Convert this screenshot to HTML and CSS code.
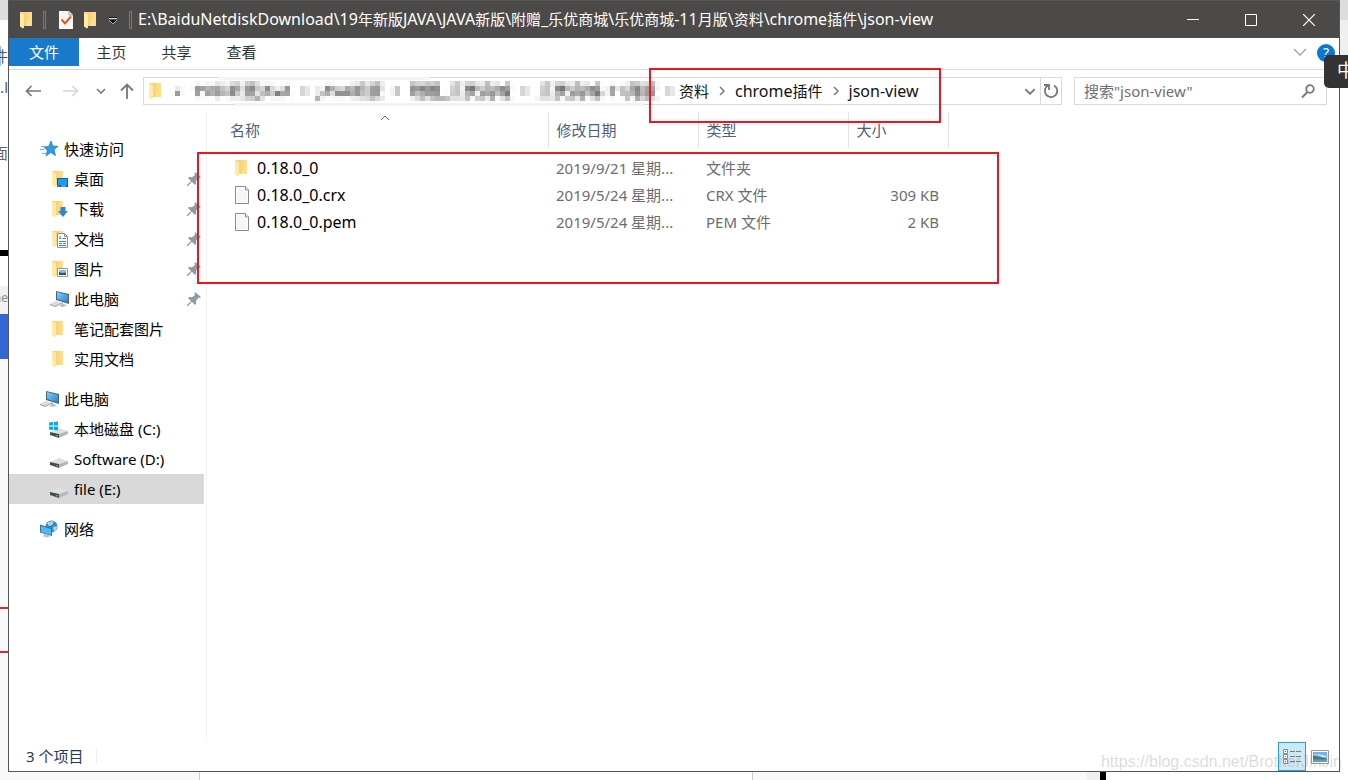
FILE: index.html
```html
<!DOCTYPE html>
<html lang="zh-CN">
<head>
<meta charset="utf-8">
<title>json-view</title>
<link rel="stylesheet" href="styles.css">
</head>
<body>
<svg class="defs" width="0" height="0" aria-hidden="true">
  <defs>
    <filter id="mosaic" x="0" y="0" width="1" height="1" color-interpolation-filters="sRGB">
      <feGaussianBlur in="SourceGraphic" stdDeviation="1.300" result="soft"/>
      <feFlood x="2" y="2" width="1" height="1"/>
      <feComposite x="0" y="0" width="5" height="5"/>
      <feTile result="grid"/>
      <feComposite in="soft" in2="grid" operator="in"/>
      <feMorphology operator="dilate" radius="2"/>
    </filter>
    <linearGradient id="gold" x1="0" x2="1"><stop offset="0" stop-color="#f0cd68"/><stop offset="1" stop-color="#ffdf8c"/></linearGradient>
    <linearGradient id="sky" x1="0" x2="1" y2="1"><stop offset="0" stop-color="#7fd0fb"/><stop offset="1" stop-color="#1e86d6"/></linearGradient>
    <symbol id="folder" viewBox="0 0 18 18"><path d="M2 1h12v14H2z" fill="url(#gold)"/><path d="M2 1l4 2v13.500l-1 1-3-2z" fill="#ffe9a8"/><path d="M10 11h1v4h-1z" fill="#fff2c4"/></symbol>
    <symbol id="halffolder" viewBox="0 0 18 18"><path d="M2 1h11v14H2z" fill="url(#gold)"/><path d="M2 1l4 2v13.500l-1 1-3-2z" fill="#ffe9a8"/></symbol>
    <symbol id="desktop" viewBox="0 0 18 18"><use href="#halffolder"/><path d="M7 8h11v9H7z" fill="#0b62b0"/><path d="M8 9h9v6H8z" fill="#1b9cf0"/><path d="M8 16h1M11 16h5" stroke="#9ad4ff"/></symbol>
    <symbol id="download" viewBox="0 0 18 18"><use href="#halffolder"/><path d="M10.500 7h5v4H18l-5 6-5-6h2.500z" fill="#2f86d4"/></symbol>
    <symbol id="docs" viewBox="0 0 18 18"><use href="#halffolder"/><path d="M7.500 3.500h7l3 3v11h-10z" fill="#fff" stroke="#8a8f94"/><path d="M14.500 3.500v3h3" fill="none" stroke="#8a8f94"/><path d="M9 8.500h2M12.500 8.500h3.500M9 11.500h7M9 13.500h3M13 13.500h3M9 15.500h7M10 6v3" stroke="#3b8bca"/></symbol>
    <symbol id="pics" viewBox="0 0 18 18"><use href="#halffolder"/><path d="M7.500 8.500h10v8h-10z" fill="#fff" stroke="#999"/><path d="M9 10h7v5H9z" fill="#82bce9"/><path d="M9 12l3 1 4-.5V15H9z" fill="#285b63"/></symbol>
    <symbol id="pc" viewBox="0 0 20 18"><path d="M7 1l13 3v10L7 10z" fill="#51616e"/><path d="M8 2l11 3v7.500L8 9z" fill="url(#sky)"/><path d="M12 11l2 1v2l4 1-4 2-4-1 2-1z" fill="#b7bcc0"/><path d="M1 14l6-3 5 2-6 3z" fill="#d9dcdf"/><path d="M1 14l5 2 6-3v1l-6 3-5-2z" fill="#8f979e"/></symbol>
    <symbol id="star" viewBox="0 0 18 18"><path d="M11 1l1.700 5 5.300.3-4 3.400 1.500 5.800-4.800-3L6 16l1.300-5.400L4 7l4.800-.6z" fill="#2b9be8" stroke="#1877bd" stroke-width=".7"/><path d="M1 6.500h5M0 9.500h4M2 13.500h4" stroke="#62b5ec"/></symbol>
    <symbol id="disk" viewBox="0 0 20 18"><path d="M1 12l9-4 9 3-9 3z" fill="#dfe0e2"/><path d="M1 12l9 2v4l-9-3z" fill="#464b4c"/><path d="M10 14l9-3v3l-9 4z" fill="#b4b6b8"/><path d="M7 15.500l2 .5" stroke="#3ecf68"/></symbol>
    <symbol id="sysdisk" viewBox="0 0 20 18"><use href="#disk"/><path d="M0 2.500l4-.5v3.500H0zM5 2l4-.5v4H5zM0 6.500h4V10l-4-.5zM5 6.500h4v4L5 10z" fill="#00adef"/></symbol>
    <symbol id="net" viewBox="0 0 20 18"><circle cx="12.500" cy="6.500" r="6" fill="#3b86b9"/><path d="M8 3q4-3 7-1l-2 3-3 1zM14 7l4-1q0 4-3 6z" fill="#a9d6e8"/><path d="M1 4.500l12 3.500v8L1 12.500z" fill="#3f7399"/><path d="M2 6l10 3v6L2 12z" fill="#4db8f8"/><path d="M5 14l4 1 3 1-4 1.500-4-1z" fill="#bcc3c8"/></symbol>
    <symbol id="pin" viewBox="0 0 14 14"><path d="M8 0l6 5-1.500 1-1-.3-2.500 3 .2 3L8 13 4.800 9.800 1 14H0v-1l4-4L1 6l1-1 3 .2L8 3l-.5-1.500z" fill="#8f9ba3"/></symbol>
    <symbol id="file" viewBox="0 0 18 18"><path d="M2.500.5h10l3 3.500v13.500h-13z" fill="#fff" stroke="#8a8a8a"/><path d="M4 2h7v4h3v10H4z" fill="#f4f6f7"/><path d="M12.500.5V4h3" fill="#fff" stroke="#8a8a8a"/></symbol>
    <symbol id="arrow" viewBox="0 0 16 12"><path d="M6.500 1L1.500 6l5 5M2 6h14" fill="none" stroke="currentColor" stroke-width="1.700"/></symbol>
    <symbol id="chev" viewBox="0 0 10 6"><path d="M1 1l4 4 4-4" fill="none" stroke="currentColor" stroke-width="1.600"/></symbol>
    <symbol id="gt" viewBox="0 0 6 10"><path d="M1 1l4 4-4 4" fill="none" stroke="currentColor" stroke-width="1.500"/></symbol>
  </defs>
</svg>

<div class="desk">
  <div class="edge-left" aria-hidden="true">
    <div class="el-top"></div>
    <div class="el-page">
      <span class="frag frag-a">件</span>
      <span class="frag frag-b">.l</span>
      <span class="frag frag-c">面</span>
    </div>
    <div class="el-bar"></div>
    <div class="el-gap"></div>
    <div class="el-tab">ne</div>
    <div class="el-blue"></div>
    <div class="el-rest"><i></i><i></i></div>
  </div>

  <main class="window">
    <header class="titlebar">
      <svg class="i18" aria-hidden="true"><use href="#folder"/></svg>
      <i class="tsep"></i>
      <button class="qa qa-doc" aria-label="属性"><svg width="14" height="18" viewBox="0 0 14 18"><path d="M0 0h10l4 4v14H0z" fill="#f8f8f8"/><path d="M10 0v4h4" fill="none" stroke="#999"/><path d="M2.500 8.500l3.500 4 6-7" fill="none" stroke="#e8590c" stroke-width="2"/></svg></button>
      <button class="qa" aria-label="新建文件夹"><svg class="i18"><use href="#folder"/></svg></button>
      <button class="qa qa-more" aria-label="自定义"><svg width="8" height="8" viewBox="0 0 8 8"><path d="M0 1.500h8" stroke="#111"/><path d="M0 2.500h8" stroke="#ddd"/><path d="M0 4h8L4 8z" fill="#111"/><path d="M0 4l4 4 4-4" fill="none" stroke="#ccc" stroke-width=".8"/></svg></button>
      <i class="tsep tsep-b"></i>
      <h1>E:\BaiduNetdiskDownload\19<span class="zh">年新版</span>JAVA\JAVA<span class="zh">新版</span>\<span class="zh">附赠</span>_<span class="zh">乐优商城</span>\<span class="zh">乐优商城</span>-11<span class="zh">月版</span>\<span class="zh">资料</span>\chrome<span class="zh">插件</span>\json-view</h1>
      <div class="wbtns">
        <button aria-label="最小化"><svg width="12" height="12"><path d="M0 5.500h12" stroke="#fff"/></svg></button>
        <button aria-label="最大化"><svg width="12" height="12"><path d="M.5.5h11v11H.5z" fill="none" stroke="#fff"/></svg></button>
        <button aria-label="关闭"><svg width="12" height="12"><path d="M0 0l12 12M12 0L0 12" stroke="#fff" stroke-width="1.200"/></svg></button>
      </div>
    </header>

    <nav class="ribbon">
      <button class="tab active">文件</button>
      <button class="tab">主页</button>
      <button class="tab">共享</button>
      <button class="tab">查看</button>
      <span class="grow"></span>
      <button class="expand" aria-label="展开功能区"><svg width="14" height="8"><path d="M1 1l6 6 6-6" fill="none" stroke="#a0a0a0" stroke-width="1.300"/></svg></button>
      <button class="help" aria-label="帮助">?</button>
    </nav>

    <div class="navbar">
      <button class="nb" aria-label="后退"><svg width="16" height="12"><use href="#arrow"/></svg></button>
      <button class="nb off" aria-label="前进"><svg width="16" height="12" class="flip"><use href="#arrow"/></svg></button>
      <button class="nb small" aria-label="最近"><svg width="10" height="6"><use href="#chev"/></svg></button>
      <button class="nb up" aria-label="上移"><svg width="14" height="16" viewBox="0 0 14 16"><path d="M1 7.500L7 1.500l6 6M7 2v14" fill="none" stroke="currentColor" stroke-width="1.800"/></svg></button>
      <div class="address">
        <svg class="i18" aria-hidden="true"><use href="#folder"/></svg>
        <div class="masked" aria-hidden="true">
          <span>«</span>
          <span>19年新版JAVA</span><svg width="6" height="10"><use href="#gt"/></svg>
          <span>JAVA新版</span><svg width="6" height="10"><use href="#gt"/></svg>
          <span>附赠_乐优商城</span><svg width="6" height="10"><use href="#gt"/></svg>
          <span>乐优商城-11月版</span><svg width="6" height="10"><use href="#gt"/></svg>
        </div>
        <a class="crumb" href="#"><span class="zh">资料</span></a><svg class="gt" width="6" height="10"><use href="#gt"/></svg>
        <a class="crumb" href="#">chrome<span class="zh">插件</span></a><svg class="gt" width="6" height="10"><use href="#gt"/></svg>
        <a class="crumb" href="#">json-view</a>
        <span class="grow"></span>
        <button class="drop" aria-label="历史"><svg width="12" height="7" viewBox="0 0 10 6"><use href="#chev"/></svg></button>
        <button class="refresh" aria-label="刷新"><svg width="16" height="16" viewBox="0 0 16 16"><path d="M5.500 2.300A6.200 6.200 0 1 0 11 2.500" fill="none" stroke="currentColor" stroke-width="1.800"/><path d="M1 2h5v5" fill="none" stroke="currentColor" stroke-width="1.800"/></svg></button>
      </div>
      <div class="search">
        <input type="text" aria-label="搜索" placeholder='搜索"json-view"'>
        <svg width="14" height="14" viewBox="0 0 14 14" aria-hidden="true"><circle cx="9" cy="5" r="3.800" fill="none" stroke="#777" stroke-width="1.800"/><path d="M6.500 8L1 13.500" stroke="#777" stroke-width="2"/></svg>
      </div>
    </div>

    <div class="body">
      <aside class="side">
        <div class="grp">
          <div class="row top"><svg class="ic"><use href="#star"/></svg>快速访问</div>
          <div class="row"><svg class="ic"><use href="#desktop"/></svg>桌面<svg class="pin"><use href="#pin"/></svg></div>
          <div class="row"><svg class="ic"><use href="#download"/></svg>下载<svg class="pin"><use href="#pin"/></svg></div>
          <div class="row"><svg class="ic"><use href="#docs"/></svg>文档<svg class="pin"><use href="#pin"/></svg></div>
          <div class="row"><svg class="ic"><use href="#pics"/></svg>图片<svg class="pin"><use href="#pin"/></svg></div>
          <div class="row"><svg class="ic"><use href="#pc"/></svg>此电脑<svg class="pin"><use href="#pin"/></svg></div>
          <div class="row"><svg class="ic"><use href="#halffolder"/></svg>笔记配套图片</div>
          <div class="row"><svg class="ic"><use href="#halffolder"/></svg>实用文档</div>
        </div>
        <div class="grp">
          <div class="row top"><svg class="ic"><use href="#pc"/></svg>此电脑</div>
          <div class="row"><svg class="ic"><use href="#sysdisk"/></svg>本地磁盘 (C:)</div>
          <div class="row"><svg class="ic"><use href="#disk"/></svg>Software (D:)</div>
          <div class="row sel"><svg class="ic"><use href="#disk"/></svg>file (E:)</div>
        </div>
        <div class="grp">
          <div class="row top"><svg class="ic"><use href="#net"/></svg>网络</div>
        </div>
      </aside>
      <section class="files">
        <table>
          <colgroup><col class="c-name"><col class="c-date"><col class="c-type"><col class="c-size"></colgroup>
          <thead><tr><th class="name">名称<svg class="sort" width="10" height="6"><path d="M1 5l4-4 4 4" fill="none" stroke="#666"/></svg></th><th>修改日期</th><th>类型</th><th>大小</th></tr></thead>
          <tbody>
            <tr><td class="name"><div class="fn"><svg class="fi"><use href="#folder"/></svg>0.18.0_0</div></td><td>2019/9/21 星期...</td><td>文件夹</td><td class="size"></td></tr>
            <tr><td class="name"><div class="fn"><svg class="fi"><use href="#file"/></svg>0.18.0_0.crx</div></td><td>2019/5/24 星期...</td><td>CRX 文件</td><td class="size">309 KB</td></tr>
            <tr><td class="name"><div class="fn"><svg class="fi"><use href="#file"/></svg>0.18.0_0.pem</div></td><td>2019/5/24 星期...</td><td>PEM 文件</td><td class="size">2 KB</td></tr>
          </tbody>
        </table>
      </section>
    </div>

    <footer class="status">
      <span class="count">3 个项目</span>
      <span class="grow"></span>
      <button class="vb on" aria-label="详细信息"><svg width="18" height="16" viewBox="0 0 18 16"><path d="M.5.5h4v4h-4zM.5 5.500h4v4h-4zM.5 10.500h4v4h-4z" fill="#fff" stroke="#8a8a8a"/><path d="M2 2h1v1H2z" fill="#1b72b8"/><path d="M2 7h1v1H2z" fill="#2a8"/><path d="M2 12h1v1H2z" fill="#d43"/><path d="M7 2.500h5M13 2.500h5M7 7.500h5M13 7.500h5M7 12.500h5M13 12.500h5" stroke="#7a7a7a"/></svg></button>
      <button class="vb" aria-label="大图标"><svg width="18" height="14" viewBox="0 0 18 14"><path d="M.5.5h17v13H.5z" fill="#fff" stroke="#999"/><path d="M2 2h14v10H2z" fill="#6fb0ee"/><path d="M2 5h5l4 2h5V6l-5-1-4-1z" fill="#d5eafa"/><path d="M2 6q5 0 14 3v1H2z" fill="#3f7a62"/><path d="M2 9.500h14V12H2z" fill="#5d9cd0"/></svg></button>
    </footer>
  </main>

  <div class="edge-right" aria-hidden="true"><div class="er-top"></div><div class="er-mid"></div></div>
  <div class="edge-bottom" aria-hidden="true"><i class="b1"></i><i class="b2"></i><i class="b3"></i><i class="b4"></i><i class="b5"></i></div>

  <div class="mark mark-path"></div>
  <div class="mark mark-files"></div>
  <div class="ime">中</div>
  <div class="watermark">https://blog.csdn.net/BrotherJinJin</div>
</div>
</body>
</html>
```
FILE: styles.css
```css
* { box-sizing: border-box; }
body { margin: 0; font: 15px/20px "Noto Sans", "Noto Sans CJK SC", sans-serif; color: #000; }
button { font: inherit; color: inherit; border: 0; padding: 0; background: none; display: flex; align-items: center; justify-content: center; }
svg { flex: none; display: block; }
.defs { position: absolute; }
.grow { flex: 1; }
.i18 { width: 18px; height: 18px; }
.zh { font-size: 15px; }

.desk { position: relative; display: grid; grid-template-columns: 8px minmax(0, 1fr) 8px; grid-template-rows: 1fr 8px; min-height: 100vh; overflow: hidden; background: #fff; }
.window { display: flex; flex-direction: column; border: 1px solid #555; border-top: 0; background: #fff; }

/* Desktop edges around the window */
.edge-left { display: flex; flex-direction: column; overflow: hidden; background: #f8f9fb; }
.el-top { height: 20px; background: #ddd; }
.el-page { height: 230px; background: #fff; padding-top: 26px; }
.frag { display: flex; justify-content: flex-end; height: 20px; width: 8px; overflow: hidden; color: #666; }
.frag-a { background: linear-gradient(90deg, #8cc8f7 1px, #fff 1px); color: #456; }
.frag-b { margin-top: 11px; color: #557; }
.frag-c { margin-top: 46px; }
.el-bar { height: 6px; background: #000; }
.el-gap { height: 30px; background: #fff; }
.el-tab { height: 28px; background: #f1f1f2; color: #888; font-size: 12px; line-height: 24px; display: flex; justify-content: flex-end; }
.el-blue { height: 45px; background: #3367d6; }
.el-rest { flex: 1; padding-top: 248px; }
.el-rest i { display: block; height: 2px; margin-bottom: 42px; background: #e8222a; }
.edge-right { background: #fff; }
.er-top { height: 20px; background: #ddd; }
.er-mid { height: 35px; background: #efefef; }
.edge-bottom { grid-column: 1 / -1; display: flex; background: #fff; }
.edge-bottom i { height: 8px; }
.b1 { width: 200px; background: #f8f9fb; border-right: 1px solid #ccc; }
.b2 { width: 553px; border-right: 1px solid #ccc; }
.b3 { width: 334px; background: #f8f9fb; }
.b4 { width: 13px; background: #f0f0f0; }
.b5 { width: 6px; background: #000; }

/* Title bar */
.titlebar { display: flex; align-items: center; height: 38px; padding: 0 1px 0 9px; background: #4c4a48; border-top: 1px solid #555; color: #fff; }
.tsep { width: 3px; height: 18px; margin-left: 7px; border: 1px solid #777; }
.tsep-b { margin-left: 12px; }
.qa-doc { margin-left: 13px; }
.qa { margin-right: 9px; }
.qa-more { margin-right: 0; }
h1 { flex: 1; min-width: 0; margin: 0 0 2px 6px; font-size: 16px; font-weight: 400; line-height: 24px; white-space: nowrap; overflow: hidden; }
.wbtns { display: flex; }
.wbtns button { width: 58px; height: 36px; }

/* Ribbon tabs */
.ribbon { display: flex; height: 32px; border-bottom: 1px solid #dadada; color: #333; }
.tab { width: 65px; height: 28px; }
.tab.active { width: 70px; background: #1979ca; color: #fff; }
.expand { width: 26px; height: 28px; }
.help { width: 18px; height: 18px; margin: 6px 4px 0 4px; border-radius: 50%; background: #0a78d7; color: #fff; font-size: 14px; }

/* Navigation bar */
.navbar { display: flex; align-items: center; height: 42px; padding: 0 12px 0 16px; color: #777; }
.nb { width: 16px; height: 28px; margin-right: 22px; }
.nb.off { color: #d8d8d8; margin-right: 17px; }
.nb.small { width: 10px; margin-right: 14px; }
.nb.up { width: 14px; margin-right: 9px; }
.flip { transform: scaleX(-1); }
.address { position: relative; flex: 1; display: flex; align-items: center; height: 28px; border: 1px solid #d9d9d9; padding-left: 3px; font-size: 16px; }
.address::before, .address::after { content: ""; position: absolute; height: 3px; background: #f3f3f3; }
.address::before { left: 75px; top: -1px; width: 210px; }
.address::after { left: 90px; bottom: -2px; width: 410px; }
.masked { display: flex; align-items: center; gap: 10px; width: 514px; padding-left: 9px; color: #222; filter: url(#mosaic); font-size: 16px; white-space: nowrap; }
.crumb { color: #111; text-decoration: none; }
.gt { margin: 0 10px; }
.drop { width: 20px; height: 26px; }
.refresh { width: 21px; height: 26px; border-left: 1px solid #d9d9d9; }
.search { width: 253px; display: flex; align-items: center; height: 28px; margin-left: 12px; padding: 0 11px 0 9px; border: 1px solid #d9d9d9; }
.search input { flex: 1; min-width: 0; border: 0; outline: 0; padding: 0; font: inherit; background: none; }
.search input::placeholder { color: #707070; opacity: 1; }

/* Folder tree */
.body { flex: 1; display: flex; }
.side { width: 198px; padding: 22px 2px 0 0; border-right: 1px solid #f2f2f2; }
.grp { margin-bottom: 10px; }
.row { display: flex; align-items: center; height: 30px; padding-left: 40px; white-space: nowrap; }
.row.top { padding-left: 30px; }
.row.sel { background: #d9d9d9; }
.ic { width: 20px; height: 18px; margin-right: 5px; }
.pin { width: 14px; height: 14px; margin-left: auto; margin-right: 3px; }

/* File list */
.files { flex: 1; min-width: 0; padding-left: 13px; }
table { border-collapse: collapse; table-layout: fixed; width: 728px; }
.c-name { width: 328px; }
.c-date, .c-type { width: 150px; }
.c-size { width: 100px; }
th, td { padding: 0 9px 0 8px; text-align: left; font-weight: 400; white-space: nowrap; overflow: hidden; text-overflow: ellipsis; }
th { position: relative; height: 36px; color: #4c607a; border-right: 1px solid #e2e2e2; }
th.name { padding-left: 10px; }
.sort { position: absolute; left: 160px; top: 3px; }
td { height: 27px; color: #6d6d6d; }
td.name { color: #000; padding-left: 13px; font-size: 16px; }
td.size { text-align: right; }
tbody::before { content: ""; display: block; height: 6px; }
.fn { display: flex; align-items: center; }
.fi { width: 18px; height: 18px; margin-right: 6px; }

/* Status bar */
.status { display: flex; align-items: center; height: 29px; padding: 0 5px 0 17px; color: #1f3a5f; }
.count { padding-right: 13px; margin-bottom: 2px; border-right: 1px solid #eee; line-height: 14px; }
.vb { width: 28px; height: 29px; }
.vb.on { border: 1px solid #26a0da; background: #cbe8f6; }

/* Overlays */
.mark { position: absolute; border: 2px solid #ee1420; }
.mark-path { left: 649px; top: 68px; width: 292px; height: 55px; }
.mark-files { left: 197px; top: 152px; width: 802px; height: 132px; }
.ime { position: absolute; right: 0; top: 55px; width: 24px; height: 33px; padding-left: 13px; border-radius: 5px 0 0 5px; background: #333; color: #fff; font-size: 18px; line-height: 30px; overflow: hidden; }
.watermark { position: absolute; right: 6px; bottom: 8px; font: 16px/20px "Liberation Sans", sans-serif; color: rgba(150, 150, 150, .35); }
```
